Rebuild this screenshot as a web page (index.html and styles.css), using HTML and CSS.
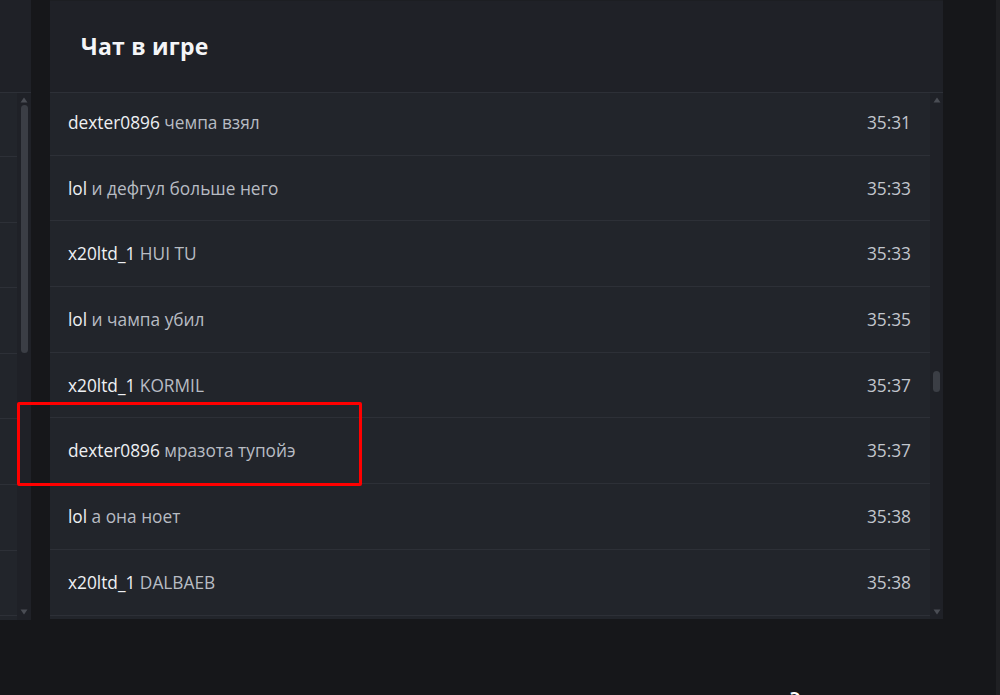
FILE: index.html
```html
<!DOCTYPE html>
<html lang="ru">
<head>
<meta charset="utf-8">
<title>Чат в игре</title>
<link rel="stylesheet" href="styles.css">
</head>
<body>
<div class="screen">
  <div class="top">
    <aside class="side">
      <div class="side-head"></div>
      <div class="side-body">
        <div class="side-list">
          <div class="side-row"></div>
          <div class="side-row"></div>
          <div class="side-row"></div>
          <div class="side-row"></div>
          <div class="side-row"></div>
          <div class="side-row"></div>
          <div class="side-row"></div>
          <div class="side-row"></div>
        </div>
        <div class="scroll side-scroll">
          <svg class="arrow" width="8" height="6" viewBox="0 0 8 6"><path d="M4 0.5 L7.5 5.5 L0.5 5.5 Z"/></svg>
          <div class="track"><div class="thumb side-thumb"></div></div>
          <svg class="arrow" width="8" height="6" viewBox="0 0 8 6"><path d="M0.5 0.5 L7.5 0.5 L4 5.5 Z"/></svg>
        </div>
      </div>
    </aside>

    <section class="chat">
      <header class="chat-head"><h1 class="title">Чат в игре</h1></header>
      <div class="chat-body">
        <div class="messages">
          <div class="list">
            <div class="msg"><span class="text"><span class="name">dexter0896</span> чемпа взял</span><span class="time">35:31</span></div>
            <div class="msg"><span class="text"><span class="name">lol</span> и дефгул больше него</span><span class="time">35:33</span></div>
            <div class="msg"><span class="text"><span class="name">x20ltd_1</span> HUI TU</span><span class="time">35:33</span></div>
            <div class="msg"><span class="text"><span class="name">lol</span> и чампа убил</span><span class="time">35:35</span></div>
            <div class="msg"><span class="text"><span class="name">x20ltd_1</span> KORMIL</span><span class="time">35:37</span></div>
            <div class="msg"><span class="text"><span class="name">dexter0896</span> мразота тупойэ</span><span class="time">35:37</span></div>
            <div class="msg"><span class="text"><span class="name">lol</span> а она ноет</span><span class="time">35:38</span></div>
            <div class="msg"><span class="text"><span class="name">x20ltd_1</span> DALBAEB</span><span class="time">35:38</span></div>
          </div>
        </div>
        <div class="scroll chat-scroll">
          <svg class="arrow" width="8" height="6" viewBox="0 0 8 6"><path d="M4 0.5 L7.5 5.5 L0.5 5.5 Z"/></svg>
          <div class="track"><div class="thumb chat-thumb"></div></div>
          <svg class="arrow" width="8" height="6" viewBox="0 0 8 6"><path d="M0.5 0.5 L7.5 0.5 L4 5.5 Z"/></svg>
        </div>
      </div>
    </section>

    <div class="gap-right"></div>
    <div class="edge"></div>
  </div>
  <div class="below"><span class="peek">Э</span></div>
  <div class="mark"></div>
</div>
</body>
</html>
```

FILE: styles.css
```css
* { box-sizing: border-box; }

html, body {
  margin: 0;
  padding: 0;
  height: 695px;
  overflow: hidden;
  background: #16171a;
  font-family: "Open Sans", "Noto Sans", "Liberation Sans", sans-serif;
}

.screen {
  position: relative;
  width: 1000px;
  height: 695px;
  overflow: hidden;
  display: flex;
  flex-direction: column;
}

.top {
  display: flex;
  align-items: flex-start;
  height: 620px;
  flex: none;
}

/* left, cut-off panel */
.side {
  width: 31px;
  height: 620px;
  flex: none;
  display: flex;
  flex-direction: column;
  background: #22252b;
  margin-right: 19px;
}
.side-head {
  height: 93px;
  flex: none;
  background: #1f2127;
  border-bottom: 1px solid #2d3037;
}
.side-body {
  flex: 1;
  display: flex;
  min-height: 0;
}
.side-list {
  flex: 1;
  overflow: hidden;
}
.side-row {
  height: 65.6px;
  border-bottom: 1px solid #2d3037;
}
.side-row:first-child { height: 64px; }

.scroll {
  flex: none;
  display: flex;
  flex-direction: column;
  align-items: center;
  background: #1f2127;
}
.arrow {
  display: block;
  fill: #4a4d54;
  flex: none;
}
.track {
  flex: 1;
  width: 100%;
  display: flex;
  flex-direction: column;
  align-items: center;
}
.thumb {
  width: 7px;
  border-radius: 4px;
  background: #3b3e45;
}

.side-scroll {
  width: 14px;
  padding: 4px 0 5px;
}
.side-scroll .track { padding: 2px 0; }
.side-thumb {
  height: 248px;
}

/* main chat panel */
.chat {
  width: 893px;
  height: 619px;
  flex: none;
  display: flex;
  flex-direction: column;
  background: #22252b;
  border-top: 1px solid #1c1e22;
}
.chat-head {
  height: 92px;
  flex: none;
  display: flex;
  align-items: center;
  padding-left: 31px;
  background: #1f2127;
  border-bottom: 1px solid #2d3037;
}
.title {
  margin: 0 0 2px;
  font-size: 23px;
  font-weight: 700;
  color: #f4f5f7;
  letter-spacing: 0.2px;
}

.chat-body {
  flex: 1;
  display: flex;
  min-height: 0;
}
.messages {
  flex: 1;
  overflow: hidden;
}
.list {
  margin-top: -3px;
}
.msg {
  height: 65.7px;
  display: flex;
  align-items: center;
  justify-content: space-between;
  padding: 0 19px 0 18px;
  border-bottom: 1px solid #2d3037;
  font-size: 17.3px;
  color: #b8bcc3;
}
.name {
  color: #eef0f3;
}
.time {
  color: #c2c6cd;
}

.chat-scroll {
  width: 13px;
  padding: 4px 0 4px;
}
.chat-thumb {
  height: 21px;
  margin-top: 268px;
}

.gap-right {
  width: 53px;
  flex: none;
}
.edge {
  width: 4px;
  height: 695px;
  flex: none;
  background: #1f2023;
}

.below {
  padding-left: 790px;
  padding-top: 70px;
  line-height: 1;
}
.peek {
  font-size: 16px;
  font-weight: 700;
  color: #ffffff;
}

/* red annotation box drawn over the screenshot */
.mark {
  position: absolute;
  left: 17px;
  top: 402px;
  width: 345px;
  height: 84px;
  border: 3px solid #ff0000;
  border-radius: 2px;
}
```
